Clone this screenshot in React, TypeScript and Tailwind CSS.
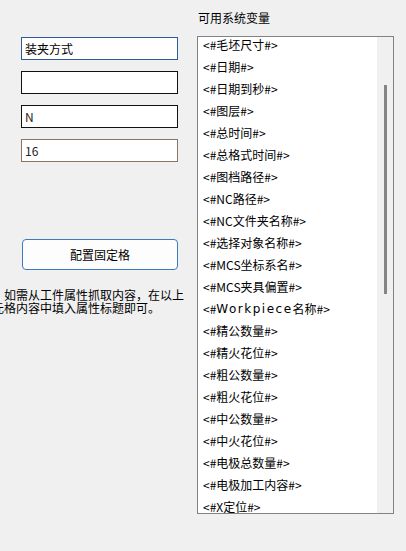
import React from "react";

const items: React.ReactNode[] = [
  "<#毛坯尺寸#>",
  "<#日期#>",
  "<#日期到秒#>",
  "<#图层#>",
  "<#总时间#>",
  "<#总格式时间#>",
  "<#图档路径#>",
  "<#NC路径#>",
  "<#NC文件夹名称#>",
  "<#选择对象名称#>",
  "<#MCS坐标系名#>",
  "<#MCS夹具偏置#>",
  <>
    {"<#"}
    <span className="tracking-[1.5px]" style={{ fontFamily: '"DejaVu Sans", sans-serif' }}>
      Workpiece
    </span>
    {"名称#>"}
  </>,
  "<#精公数量#>",
  "<#精火花位#>",
  "<#粗公数量#>",
  "<#粗火花位#>",
  "<#中公数量#>",
  "<#中火花位#>",
  "<#电极总数量#>",
  "<#电极加工内容#>",
  "<#X定位#>",
];

const font = { fontFamily: '"Noto Sans CJK SC", "Noto Sans", sans-serif' };

export default function App() {
  return (
    <div
      className="w-[406px] h-[551px] bg-[#f0f0f0] flex overflow-hidden text-[12px] text-black"
      style={font}
    >
      {/* Left column */}
      <div className="w-[197px] shrink-0 flex flex-col pt-[37px]">
        <div className="flex flex-col gap-[11px] pl-[21px]">
          <div className="w-[157px] h-[23px] bg-white border border-[#2f5a9e] flex items-center pl-[3px] leading-none">
            装夹方式
          </div>
          <div className="w-[157px] h-[23px] bg-white border border-[#111111] flex items-center pl-[3px] leading-none"></div>
          <div className="w-[157px] h-[23px] bg-white border border-[#111111] flex items-center pl-[3px] leading-none text-[#222]">
            N
          </div>
          <div className="w-[157px] h-[23px] bg-white border border-[#8a7565] flex items-center pl-[3px] leading-none text-[#222]">
            16
          </div>
        </div>
        <div className="pl-[22px] mt-[77px]">
          <button className="w-[156px] h-[31px] bg-[#fdfdfd] border border-[#3b7bbd] rounded-[4px] flex items-center justify-center leading-none text-[12px]">
            配置固定格
          </button>
        </div>
        <div className="mt-[18px] ml-[-8px] whitespace-nowrap leading-[13px] text-[12px]">
          <div>：如需从工件属性抓取内容，在以上</div>
          <div>元格内容中填入属性标题即可。</div>
        </div>
      </div>

      {/* Right column */}
      <div className="flex flex-col">
        <div className="h-[36px] pt-[10px] pl-[1px] leading-[16px]">可用系统变量</div>
        <div className="w-[197px] h-[478px] bg-white border border-[#828282] flex overflow-hidden">
          <div className="w-[179px] overflow-hidden">
            <div className="mt-[-3px] flex flex-col">
              {items.map((t, i) => (
                <div key={i} className="h-[22px] flex items-center pl-[5px] whitespace-nowrap leading-none">
                  {t}
                </div>
              ))}
            </div>
          </div>
          <div className="w-[16px] h-full bg-[#f0f0f0] flex flex-col">
            <div className="mt-[48px] ml-[7px] w-[3px] h-[209px] bg-[#858585]"></div>
          </div>
        </div>
      </div>
    </div>
  );
}
